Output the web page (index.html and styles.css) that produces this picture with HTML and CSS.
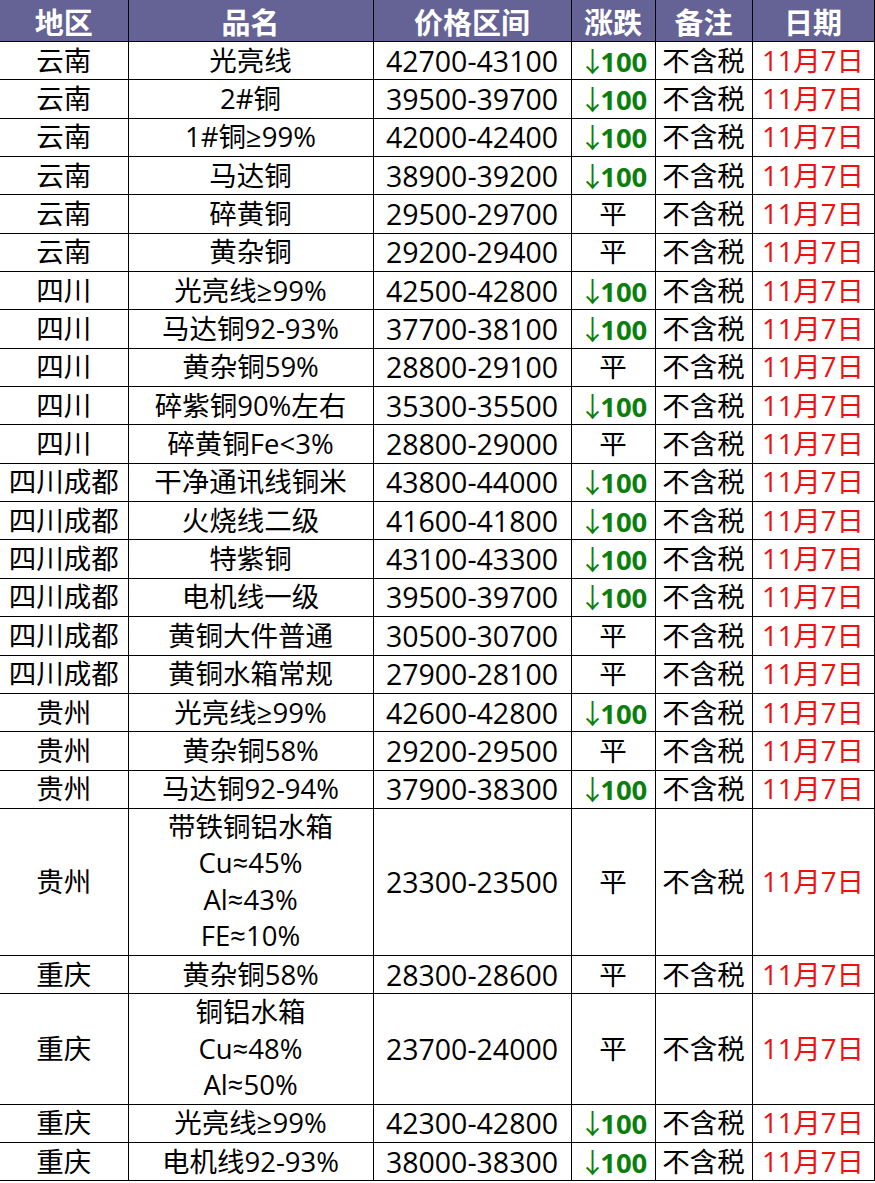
FILE: index.html
```html
<!DOCTYPE html>
<html lang="zh-CN">
<head>
<meta charset="utf-8">
<link rel="stylesheet" href="styles.css">
</head>
<body>
<table class="price">
<colgroup>
<col class="c1"><col class="c2"><col class="c3"><col class="c4"><col class="c5"><col class="c6">
</colgroup>
<thead>
<tr><th>地区</th><th>品名</th><th>价格区间</th><th class="narrow">涨跌</th><th>备注</th><th>日期</th></tr>
</thead>
<tbody>
<tr><td>云南</td><td>光亮线</td><td>42700-43100</td><td class="down"><span class="ar">↓</span>100</td><td>不含税</td><td class="date">11月7日</td></tr>
<tr><td>云南</td><td>2#铜</td><td>39500-39700</td><td class="down"><span class="ar">↓</span>100</td><td>不含税</td><td class="date">11月7日</td></tr>
<tr><td>云南</td><td>1#铜≥99%</td><td>42000-42400</td><td class="down"><span class="ar">↓</span>100</td><td>不含税</td><td class="date">11月7日</td></tr>
<tr><td>云南</td><td>马达铜</td><td>38900-39200</td><td class="down"><span class="ar">↓</span>100</td><td>不含税</td><td class="date">11月7日</td></tr>
<tr><td>云南</td><td>碎黄铜</td><td>29500-29700</td><td>平</td><td>不含税</td><td class="date">11月7日</td></tr>
<tr><td>云南</td><td>黄杂铜</td><td>29200-29400</td><td>平</td><td>不含税</td><td class="date">11月7日</td></tr>
<tr><td>四川</td><td>光亮线≥99%</td><td>42500-42800</td><td class="down"><span class="ar">↓</span>100</td><td>不含税</td><td class="date">11月7日</td></tr>
<tr><td>四川</td><td>马达铜92-93%</td><td>37700-38100</td><td class="down"><span class="ar">↓</span>100</td><td>不含税</td><td class="date">11月7日</td></tr>
<tr><td>四川</td><td>黄杂铜59%</td><td>28800-29100</td><td>平</td><td>不含税</td><td class="date">11月7日</td></tr>
<tr><td>四川</td><td>碎紫铜90%左右</td><td>35300-35500</td><td class="down"><span class="ar">↓</span>100</td><td>不含税</td><td class="date">11月7日</td></tr>
<tr><td>四川</td><td>碎黄铜Fe&lt;3%</td><td>28800-29000</td><td>平</td><td>不含税</td><td class="date">11月7日</td></tr>
<tr><td>四川成都</td><td>干净通讯线铜米</td><td>43800-44000</td><td class="down"><span class="ar">↓</span>100</td><td>不含税</td><td class="date">11月7日</td></tr>
<tr><td>四川成都</td><td>火烧线二级</td><td>41600-41800</td><td class="down"><span class="ar">↓</span>100</td><td>不含税</td><td class="date">11月7日</td></tr>
<tr><td>四川成都</td><td>特紫铜</td><td>43100-43300</td><td class="down"><span class="ar">↓</span>100</td><td>不含税</td><td class="date">11月7日</td></tr>
<tr><td>四川成都</td><td>电机线一级</td><td>39500-39700</td><td class="down"><span class="ar">↓</span>100</td><td>不含税</td><td class="date">11月7日</td></tr>
<tr><td>四川成都</td><td>黄铜大件普通</td><td>30500-30700</td><td>平</td><td>不含税</td><td class="date">11月7日</td></tr>
<tr><td>四川成都</td><td>黄铜水箱常规</td><td>27900-28100</td><td>平</td><td>不含税</td><td class="date">11月7日</td></tr>
<tr><td>贵州</td><td>光亮线≥99%</td><td>42600-42800</td><td class="down"><span class="ar">↓</span>100</td><td>不含税</td><td class="date">11月7日</td></tr>
<tr><td>贵州</td><td>黄杂铜58%</td><td>29200-29500</td><td>平</td><td>不含税</td><td class="date">11月7日</td></tr>
<tr><td>贵州</td><td>马达铜92-94%</td><td>37900-38300</td><td class="down"><span class="ar">↓</span>100</td><td>不含税</td><td class="date">11月7日</td></tr>
<tr class="multi4"><td>贵州</td><td class="lines">带铁铜铝水箱<br>Cu≈45%<br>Al≈43%<br>FE≈10%</td><td>23300-23500</td><td>平</td><td>不含税</td><td class="date">11月7日</td></tr>
<tr><td>重庆</td><td>黄杂铜58%</td><td>28300-28600</td><td>平</td><td>不含税</td><td class="date">11月7日</td></tr>
<tr class="multi3"><td>重庆</td><td class="lines">铜铝水箱<br>Cu≈48%<br>Al≈50%</td><td>23700-24000</td><td>平</td><td>不含税</td><td class="date">11月7日</td></tr>
<tr><td>重庆</td><td>光亮线≥99%</td><td>42300-42800</td><td class="down"><span class="ar">↓</span>100</td><td>不含税</td><td class="date">11月7日</td></tr>
<tr><td>重庆</td><td>电机线92-93%</td><td>38000-38300</td><td class="down"><span class="ar">↓</span>100</td><td>不含税</td><td class="date">11月7日</td></tr>
</tbody>
</table>
</body>
</html>
```

FILE: styles.css
```css
html, body {
  margin: 0;
  padding: 0;
  background: #ffffff;
}

.price {
  border-collapse: collapse;
  table-layout: fixed;
  width: 874px;
  font-family: "Open Sans", "Noto Sans CJK SC", sans-serif;
  font-size: 27.5px;
  color: #000000;
}

.c1 { width: 128px; }
.c2 { width: 245px; }
.c3 { width: 198px; }
.c4 { width: 84px; }
.c5 { width: 97px; }
.c6 { width: 122px; }

.price th,
.price td {
  border: 1px solid #000000;
  padding: 0;
  text-align: center;
  vertical-align: middle;
  white-space: nowrap;
}

.price th {
  background: #656396;
  color: #ffffff;
  font-family: "Noto Sans CJK SC", sans-serif;
  font-weight: 700;
  font-size: 29px;
  height: 41px;
  line-height: 30px;
  border-top: none;
}

.price td {
  height: 37.35px;
  line-height: 28px;
}

.price td:nth-child(3) {
  font-size: 28.5px;
}

.price tr > :first-child {
  border-left: none;
}

.down {
  color: #0b7f0b;
  font-weight: 700;
}

.down .ar {
  font-weight: 400;
  font-family: "Noto Sans CJK SC", sans-serif;
  letter-spacing: -6px;
}

.date {
  color: #f01010;
}

.multi4 td {
  height: 146px;
}

.multi3 td {
  height: 109px;
}

.price td.lines {
  line-height: 36.5px;
}
```
